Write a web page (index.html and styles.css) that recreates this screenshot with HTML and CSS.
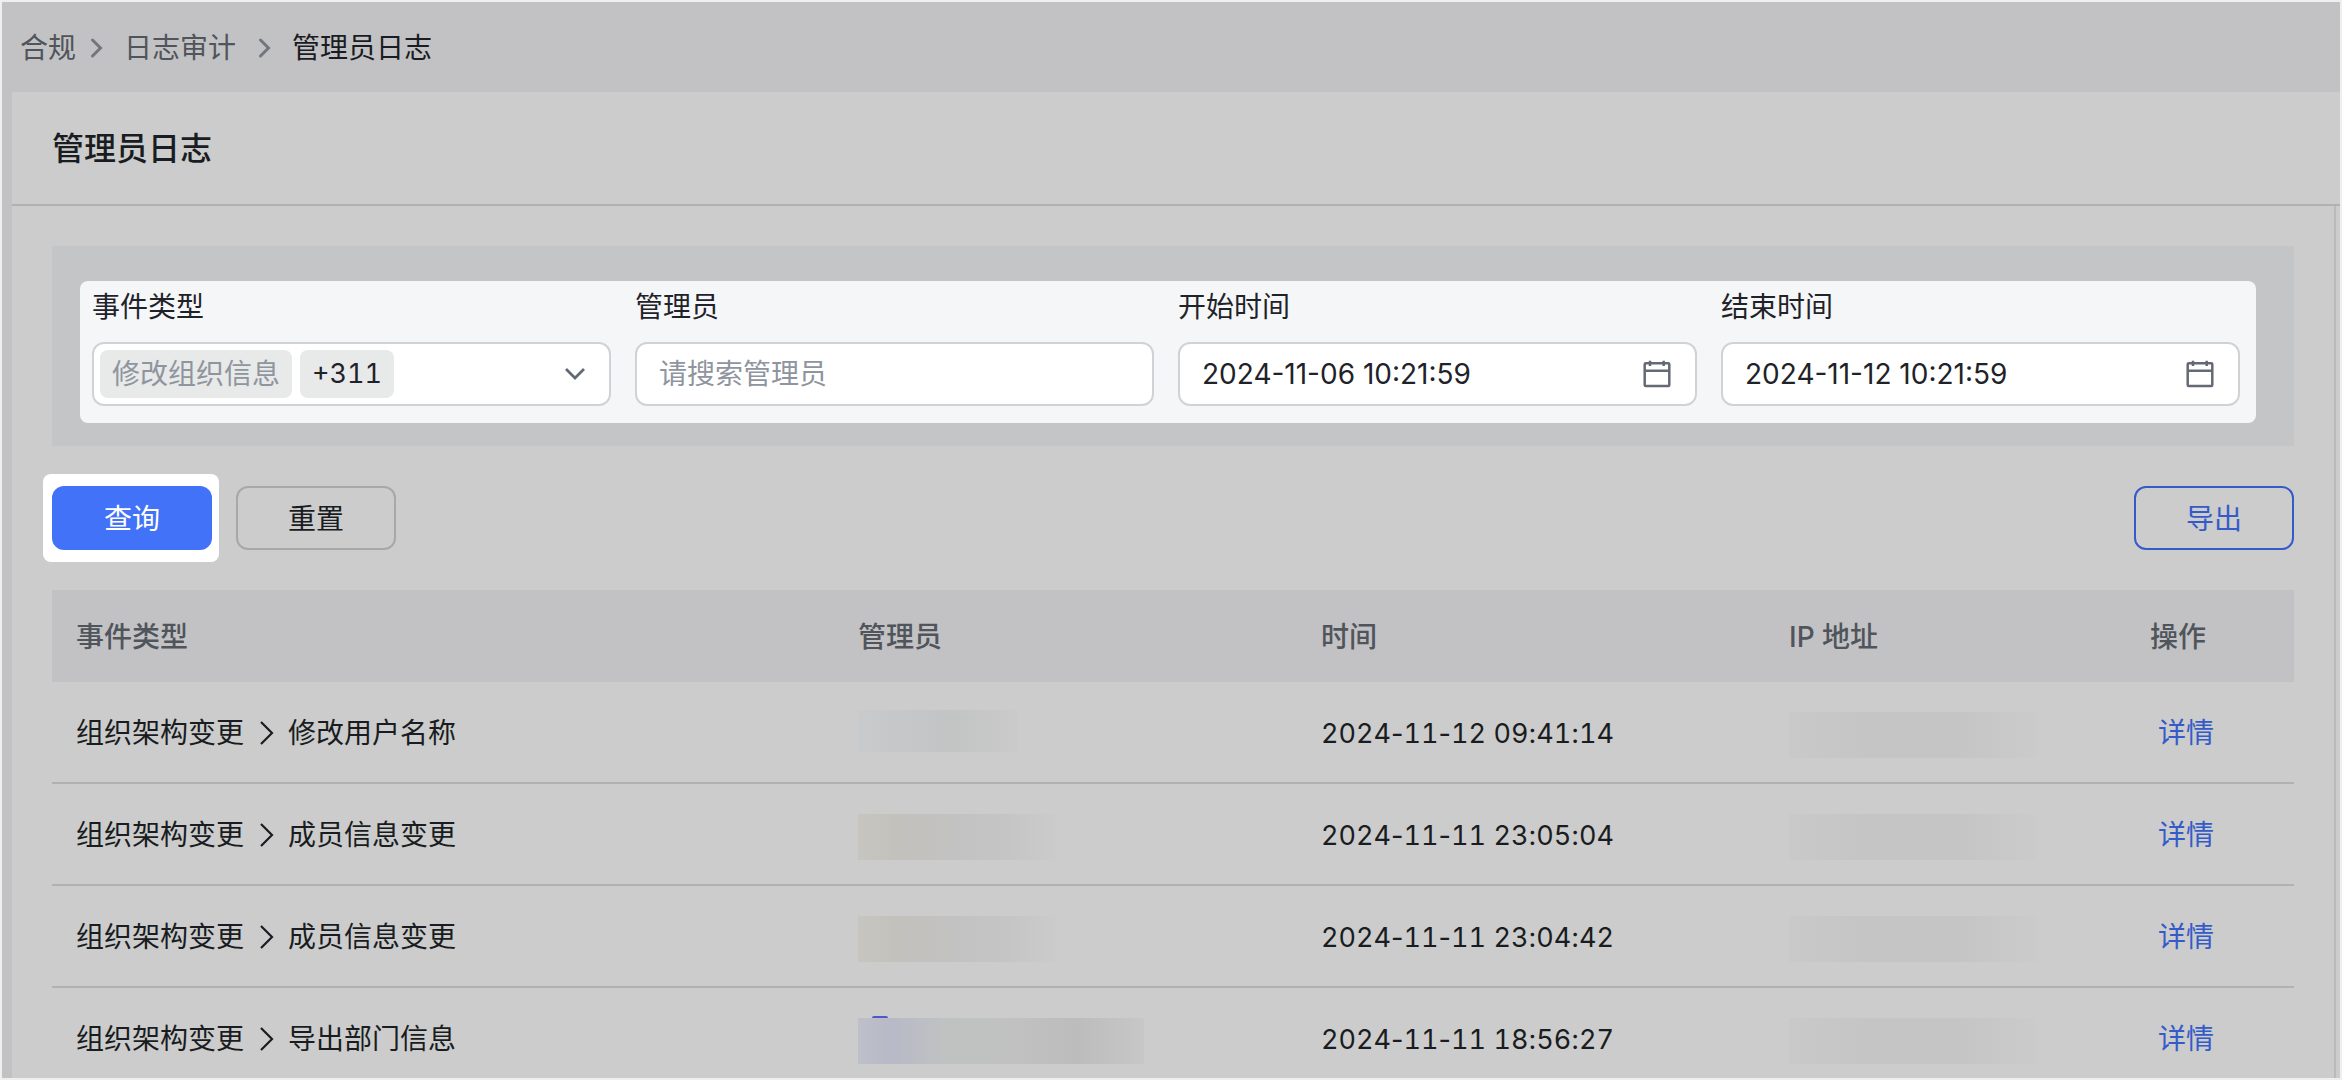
FILE: index.html
```html
<!DOCTYPE html>
<html lang="zh-CN">
<head>
<meta charset="utf-8">
<meta name="viewport" content="width=device-width, initial-scale=1">
<title>管理员日志</title>
<link rel="stylesheet" href="styles.css">
</head>
<body>
<svg class="sprite" aria-hidden="true">
  <symbol id="crumb-arrow" viewBox="0 0 20 28"><path d="M6.500 6l8 8l-8 8" fill="none" stroke="currentColor" stroke-width="3" stroke-linecap="round"/></symbol>
  <symbol id="path-arrow" viewBox="0 0 24 28"><path d="M7 3l11 11l-11 11" fill="none" stroke="currentColor" stroke-width="2.200"/></symbol>
  <symbol id="calendar" viewBox="0 0 28 28"><g fill="none" stroke="currentColor" stroke-width="2.500"><rect x="1.700" y="3.300" width="24.600" height="22.800" rx="1"/><path d="M1.700 10.800h24.600M7 .8v5.200M20.700 .8v5.200"/></g></symbol>
</svg>
<div class="app">
  <nav class="breadcrumb" aria-label="面包屑">
    <a class="crumb crumb-root" href="#">合规</a>
    <svg class="crumb-sep"><use href="#crumb-arrow"/></svg>
    <a class="crumb" href="#">日志审计</a>
    <svg class="crumb-sep"><use href="#crumb-arrow"/></svg>
    <span class="crumb crumb-current">管理员日志</span>
  </nav>
  <main class="panel">
    <header class="panel-header"><h1>管理员日志</h1></header>
    <div class="panel-body">
      <form class="filters">
        <div class="filters-focus">
          <div class="field">
            <label for="event">事件类型</label>
            <div class="control control-tags">
              <span class="tag tag-muted">修改组织信息</span>
              <span class="tag digits">+311</span>
              <select id="event"><option value=""></option></select>
              <svg class="select-arrow" viewBox="0 0 24 24"><path d="M3 7l9 9l9-9" fill="none" stroke="currentColor" stroke-width="2.800"/></svg>
            </div>
          </div>
          <div class="field">
            <label for="admin">管理员</label>
            <div class="control"><input id="admin" type="text" placeholder="请搜索管理员"></div>
          </div>
          <div class="field">
            <label for="start">开始时间</label>
            <div class="control"><input id="start" type="text" value="2024-11-06 10:21:59"><svg class="calendar"><use href="#calendar"/></svg></div>
          </div>
          <div class="field">
            <label for="end">结束时间</label>
            <div class="control"><input id="end" type="text" value="2024-11-12 10:21:59"><svg class="calendar"><use href="#calendar"/></svg></div>
          </div>
        </div>
      </form>
      <div class="actions">
        <div class="button-focus"><button class="btn btn-primary" type="button">查询</button></div>
        <button class="btn" type="button">重置</button>
        <button class="btn btn-export" type="button">导出</button>
      </div>
      <table class="log">
        <colgroup><col><col class="col-admin"><col class="col-time"><col class="col-ip"><col class="col-action"></colgroup>
        <thead>
          <tr><th>事件类型</th><th>管理员</th><th>时间</th><th>IP 地址</th><th>操作</th></tr>
        </thead>
        <tbody>
          <tr>
            <td><span class="path">组织架构变更<svg><use href="#path-arrow"/></svg>修改用户名称</span></td>
            <td><span class="mask mask-cool"></span></td>
            <td><time class="digits">2024<i>-</i>11<i>-</i>12<i> </i>09<i>:</i>41<i>:</i>14</time></td>
            <td><span class="mask mask-ip"></span></td>
            <td><a class="detail" href="#">详情</a></td>
          </tr>
          <tr>
            <td><span class="path">组织架构变更<svg><use href="#path-arrow"/></svg>成员信息变更</span></td>
            <td><span class="mask mask-warm"></span></td>
            <td><time class="digits">2024<i>-</i>11<i>-</i>11<i> </i>23<i>:</i>05<i>:</i>04</time></td>
            <td><span class="mask mask-ip"></span></td>
            <td><a class="detail" href="#">详情</a></td>
          </tr>
          <tr>
            <td><span class="path">组织架构变更<svg><use href="#path-arrow"/></svg>成员信息变更</span></td>
            <td><span class="mask mask-warm"></span></td>
            <td><time class="digits">2024<i>-</i>11<i>-</i>11<i> </i>23<i>:</i>04<i>:</i>42</time></td>
            <td><span class="mask mask-ip"></span></td>
            <td><a class="detail" href="#">详情</a></td>
          </tr>
          <tr>
            <td><span class="path">组织架构变更<svg><use href="#path-arrow"/></svg>导出部门信息</span></td>
            <td><span class="mask mask-blue"></span></td>
            <td><time class="digits">2024<i>-</i>11<i>-</i>11<i> </i>18<i>:</i>56<i>:</i>27</time></td>
            <td><span class="mask mask-ip"></span></td>
            <td><a class="detail" href="#">详情</a></td>
          </tr>
        </tbody>
      </table>
    </div>
  </main>
</div>
</body>
</html>
```

FILE: styles.css
```css
* { box-sizing: border-box; }

body {
  margin: 0;
  font: 28px/40px Inter, "Noto Sans CJK SC", sans-serif;
  color: #191c21;
}

.sprite { position: absolute; width: 0; height: 0; }

.app {
  display: flex;
  flex-direction: column;
  height: 100vh;
  overflow: hidden;
  border: 2px solid #efefef;
  background: #c2c2c4;
}

/* breadcrumb */
.breadcrumb {
  display: flex;
  flex: none;
  align-items: center;
  height: 90px;
  padding: 2px 0 0 18px;
}
.crumb { padding: 0 8px; color: #50555c; text-decoration: none; }
.crumb-root { padding: 0; }
.crumb-current { color: #191c21; }
.crumb-sep { width: 20px; height: 28px; margin: 0 10px; color: #72777e; }

/* panel */
.panel {
  display: flex;
  flex: 1;
  flex-direction: column;
  min-height: 0;
  margin-left: 10px;
  background: #ccc;
}
.panel-header {
  flex: none;
  padding: 36px 40px 34px;
  border-bottom: 2px solid #b1b1b1;
}
h1 { margin: 0; font-size: 32px; line-height: 42px; font-weight: 500; }
.panel-body {
  flex: 1;
  min-height: 0;
  margin-right: 4px;
  padding: 40px 40px 0;
  border-right: 2px solid #bababc;
}

/* filters */
.filters { padding: 35px 38px 23px 28px; background: #c4c5c6; }
.filters-focus {
  display: grid;
  grid-template-columns: repeat(4, 1fr);
  gap: 24px;
  padding: 6px 16px 17px 12px;
  border-radius: 8px;
  background: #f5f6f8;
  color: #1f2329;
}
.field { display: flex; flex-direction: column; gap: 15px; min-width: 0; }
.control {
  position: relative;
  display: flex;
  align-items: center;
  height: 64px;
  padding: 0 24px 0 22px;
  border: 2px solid #d0d3d6;
  border-radius: 12px;
  background: #fff;
}
.control input {
  flex: 1;
  min-width: 0;
  padding: 0;
  border: 0;
  outline: 0;
  background: none;
  font: inherit;
  color: inherit;
}
.control input::placeholder { color: #8f959e; opacity: 1; }
.control-tags { gap: 8px; padding: 0 6px; }
.control select {
  flex: 1;
  min-width: 0;
  height: 60px;
  border: 0;
  appearance: none;
  background: none;
  font: inherit;
}
.tag { padding: 4px 12px; border-radius: 8px; background: #e8e9e9; }
.tag-muted { color: #8f959e; }
.select-arrow {
  position: absolute;
  right: 22px;
  width: 24px;
  height: 24px;
  color: #646a73;
  pointer-events: none;
}
.calendar { width: 28px; height: 28px; color: #646a73; }

/* actions */
.actions { display: flex; align-items: center; gap: 24px; height: 144px; }
.button-focus {
  margin: 0 -7px 0 -9px;
  padding: 12px 7px 12px 9px;
  border-radius: 8px;
  background: #fff;
}
.btn {
  display: block;
  width: 160px;
  height: 64px;
  padding: 2px 6px 0;
  border: 2px solid #a7a8aa;
  border-radius: 12px;
  background: none;
  font: inherit;
  color: #191c21;
}
.btn-primary { border-color: #4272f8; background: #4272f8; color: #fff; }
.btn-export { margin-left: auto; border-color: #345bc8; color: #345bc8; }

/* log table */
.log { width: 100%; table-layout: fixed; border-collapse: separate; border-spacing: 0; }
.col-admin { width: 463px; }
.col-time { width: 468px; }
.col-ip { width: 361px; }
.col-action { width: 168px; }
.log th, .log td { padding: 2px 24px 0; text-align: left; }
.log th { height: 92px; background: #c2c2c4; font-weight: 500; color: #50555c; }
.log td { height: 102px; border-bottom: 2px solid #b1b1b1; }
.path { display: flex; align-items: center; }
.path svg { width: 24px; height: 28px; margin: 0 10px; }
.detail { padding: 0 8px; color: #345bc8; text-decoration: none; }

/* equal-width figures, with punctuation at its own width */
.digits { font-size: 27px; font-variant-numeric: tabular-nums; }
.digits i { font-style: normal; font-variant-numeric: normal; }

/* redacted values */
.mask { display: block; height: 46px; margin-top: 4px; }
.mask-cool { width: 160px; height: 42px; margin: 0 0 4px; background: linear-gradient(90deg, #c8cacc, #c4c6c8 35%, #c3c4c4 60%, #cacaca); }
.mask-warm { width: 198px; background: linear-gradient(90deg, #c7c5c0, #c3c1bc 20%, #c2c2c2 50%, #c5c5c5 75%, #cbcbcb); }
.mask-blue {
  position: relative;
  width: 286px;
  background: linear-gradient(90deg, #bdc0c9, #b7bac6 12%, #c0c2c2 32%, #c1c1c1 55%, #bcbcbc 76%, #c7c7c7);
}
.mask-blue::before {
  content: "";
  position: absolute;
  top: -2px;
  left: 14px;
  width: 16px;
  height: 2px;
  border-radius: 8px 8px 0 0;
  background: #4a5cc4;
}
.mask-ip { width: 248px; background: linear-gradient(90deg, #c9c9c9, #c5c5c5 30%, #c5c5c5 70%, #cbcbcb); }
```
